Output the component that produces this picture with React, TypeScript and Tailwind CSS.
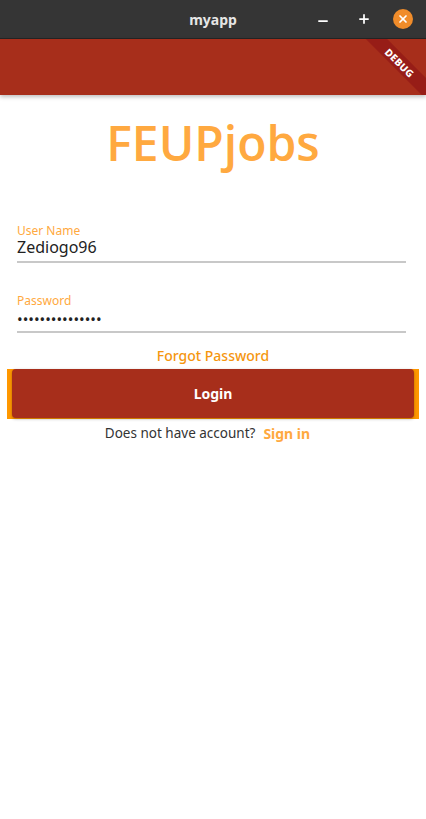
import { X, Minus, Plus } from 'lucide-react';

export default function App() {
  return (
    <div className="w-[426px] h-[819px] bg-white flex flex-col overflow-hidden font-['Noto_Sans',sans-serif]">
      {/* window title bar */}
      <div className="h-[39px] bg-[#353535] border-b border-[#242424] flex items-center relative shrink-0">
        <span className="absolute left-0 right-0 text-center text-[14px] font-bold text-[#e6e6e6] font-['Noto_Sans',sans-serif]">
          myapp
        </span>
        <div className="ml-auto flex items-center pr-[13px] relative">
          <Minus className="w-[14px] h-[14px] text-white mt-[4px]" strokeWidth={3} />
          <Plus className="w-[14px] h-[14px] text-white ml-[27px]" strokeWidth={3} />
          <div className="w-[20px] h-[20px] rounded-full bg-[#f08c2a] flex items-center justify-center ml-[22px]">
            <X className="w-[12px] h-[12px] text-white" strokeWidth={3.5} />
          </div>
        </div>
      </div>

      {/* app bar */}
      <div className="h-[56px] bg-[#a72e1b] shadow-[0_2px_4px_rgba(0,0,0,0.25)] relative overflow-hidden shrink-0 z-10">
        <div className="absolute top-[16px] right-[-24px] w-[100px] h-[15px] bg-[#971d17] rotate-45 origin-center flex items-center justify-center">
          <span className="text-[10px] font-extrabold text-white tracking-[0.3px] leading-none">DEBUG</span>
        </div>
      </div>

      <div className="flex flex-col">
        <h1 className="text-center text-[48px] font-semibold text-[#ffa940] leading-none mt-[24px] font-['Open_Sans',sans-serif]">
          FEUPjobs
        </h1>

        <div className="px-[17px] mt-[57px] flex flex-col">
          <label className="text-[12px] text-[#ffa940] leading-[13px]">User Name</label>
          <div className="text-[16px] text-[#222] leading-[20px] h-[26px] border-b-2 border-[#c8c8c8] w-[389px]">Zediogo96</div>

          <label className="text-[12px] text-[#ffa940] leading-[13px] mt-[31px]">Password</label>
          <div className="text-[15px] text-[#222] leading-[20px] h-[26px] border-b-2 border-[#c8c8c8] w-[389px] pt-[2px]">
            •••••••••••••••
          </div>
        </div>

        <button className="mx-auto mt-[14px] text-[14px] font-medium text-[#f5960e] leading-[18px]">
          Forgot Password
        </button>

        <div className="mx-[7px] mt-[4px] h-[50px] bg-[#ff9800] px-[5px]">
          <button className="w-full h-[49px] bg-[#a72e1b] rounded-[4px] shadow-[0_1px_3px_rgba(0,0,0,0.3)] text-white text-[14px] font-bold">
            Login
          </button>
        </div>

        <div className="flex items-center justify-center mt-[4px] gap-[8px] mr-[11px]">
          <span className="text-[13.5px] text-[#333]">Does not have account?</span>
          <span className="text-[14px] font-bold text-[#ffa940]">Sign in</span>
        </div>
      </div>
    </div>
  );
}
